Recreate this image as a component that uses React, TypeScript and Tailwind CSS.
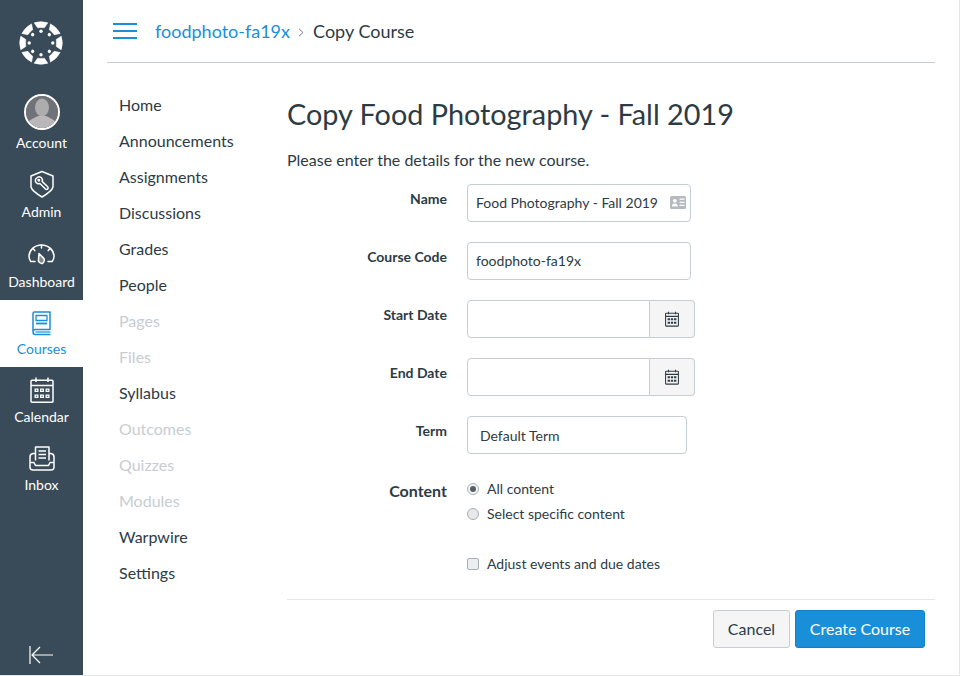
import React from 'react';

const courseLinks = [
  { name: 'Home' },
  { name: 'Announcements' },
  { name: 'Assignments' },
  { name: 'Discussions' },
  { name: 'Grades' },
  { name: 'People' },
  { name: 'Pages', off: true },
  { name: 'Files', off: true },
  { name: 'Syllabus' },
  { name: 'Outcomes', off: true },
  { name: 'Quizzes', off: true },
  { name: 'Modules', off: true },
  { name: 'Warpwire' },
  { name: 'Settings' },
];

function CanvasLogo() {
  const angles = [0, 45, 90, 135, 180, 225, 270, 315];
  return (
    <svg width="44" height="44" viewBox="-22 -22 44 44" fill="#fff">
      {angles.map((a) => (
        <g key={a} transform={`rotate(${a})`}>
          <path d="M-6.8 -20.2 Q0 -22.4 6.8 -20.2 L3.4 -15.2 Q0 -15.8 -3.4 -15.2 Z" stroke="#fff" strokeWidth="0.6" strokeLinejoin="round" />
          <circle cx="0" cy="-11.8" r="1.7" />
        </g>
      ))}
    </svg>
  );
}

function AccountIcon() {
  return (
    <div className="w-9 h-9 rounded-full border-2 border-white bg-[#8f8f8f] overflow-hidden">
      <svg width="32" height="32" viewBox="0 0 32 32">
        <rect width="32" height="32" fill="#6f7378" />
        <ellipse cx="16" cy="11.5" rx="7" ry="9" fill="#aeacac" />
        <path d="M0 32 V27 Q5 23 12 20 L20 20 Q27 23 32 27 V32 Z" fill="#b9b7b7" />
      </svg>
    </div>
  );
}

function AdminIcon() {
  return (
    <svg className="mb-px" width="26" height="28" viewBox="0 0 26 28" fill="none" stroke="#fff" strokeWidth="1.5" strokeLinejoin="round" strokeLinecap="round">
      <path d="M13 1.5 L24 6 V17 Q23 21 13 27 Q3 21 2 17 V6 Z" />
      <path d="M8.2 7.6 a3.2 3.2 0 0 1 4.4 .4 a3.2 3.2 0 0 1 .5 3.4 l5.6 5.4 a1.5 1.5 0 0 1 -2.2 2.2 l-5.6 -5.5 a3.3 3.3 0 0 1 -3.6 -.7 a3.2 3.2 0 0 1 .9 -5.2 Z" />
      <circle cx="9.8" cy="10.2" r="0.7" />
    </svg>
  );
}

function DashboardIcon() {
  return (
    <svg className="mb-1" width="27" height="21" viewBox="0 0 27 21" fill="none" stroke="#fff" strokeWidth="1.5" strokeLinecap="round" strokeLinejoin="round">
      <path d="M7 17.5 H2.8 Q1 15 1 12.5 A12.5 11.5 0 0 1 26 12.5 Q26 15 24.2 17.5 H20" />
      <path d="M13.5 1 V4 M5 4.6 L6.8 6.6 M22 4.6 L20.2 6.6" />
      <path d="M11 9.5 L16 14.6 Q17 17.6 14.6 19.4 Q11.6 20 10.4 17 Z" fill="#fff" fillOpacity="0.35" />
    </svg>
  );
}

function CoursesIcon() {
  return (
    <svg width="21" height="25" viewBox="0 0 21 25" fill="none" stroke="#1a8fd9" strokeWidth="1.5" strokeLinejoin="round">
      <path d="M2 21 V2.5 Q2 1 3.5 1 H19 V18.5 H4 Q2 18.5 2 21 Q2 23.5 4 23.5 H19.5" />
      <path d="M4.5 21 H19.5" strokeWidth="1.2" />
      <rect x="5" y="4.5" width="11" height="5" strokeWidth="1.3" />
      <path d="M5 12.5 H16" strokeWidth="1.8" />
    </svg>
  );
}

function CalendarIcon({ size = 24, color = '#fff', sw = 1.5, className = '' }: { size?: number; color?: string; sw?: number; className?: string }) {
  return (
    <svg className={className} width={size} height={size + 2} viewBox="0 0 24 26" fill="none" stroke={color} strokeWidth={sw}>
      <rect x="1" y="3.2" width="22" height="22" rx="1" />
      <path d="M1 8.5 H23 M6 0.5 V5 M18 0.5 V5" />
      <g fill={color} stroke="none">
        <path d="M4.5 11.5h4v3.6h-4z M10 11.5h4v3.6h-4z M15.5 11.5h4v3.6h-4z M4.5 17.5h4v3.6h-4z M10 17.5h4v3.6h-4z M15.5 17.5h4v3.6h-4z" />
      </g>
      <g fill="#394b58" stroke="none" opacity={color === '#fff' ? 1 : 0}>
        <path d="M5.8 12.8h1.4v1H5.8z M11.3 12.8h1.4v1h-1.4z M16.8 12.8h1.4v1h-1.4z M5.8 18.8h1.4v1H5.8z M11.3 18.8h1.4v1h-1.4z M16.8 18.8h1.4v1h-1.4z" />
      </g>
    </svg>
  );
}

function InboxIcon() {
  return (
    <svg className="mb-px" width="26" height="25" viewBox="0 0 26 25" fill="none" stroke="#fff" strokeWidth="1.5" strokeLinejoin="round">
      <path d="M6.5 14.5 V1 H20 V14.5" />
      <path d="M9.5 5 H17 M9.5 8.5 H17 M9.5 12 H17" />
      <path d="M6.5 7.5 H4 Q1 8 1 11 V21 Q1 24 4 24 H22 Q25 24 25 21 V11 Q25 8 22 7.5 H20" />
      <path d="M1 16.5 H5 L6.5 19.5 H19.5 L21 16.5 H25" />
    </svg>
  );
}

function SideItem({ icon, label, active, h }: { icon: React.ReactNode; label: string; active?: boolean; h: string }) {
  return (
    <div className={`${h} flex flex-col items-center justify-end pb-[10px] ${active ? 'bg-white text-[#1a8fd9]' : 'text-white'}`}>
      {icon}
      <span className="text-[14px] leading-[17px] mt-[4px]">{label}</span>
    </div>
  );
}

function FormRow({ label, children }: { label: string; children: React.ReactNode }) {
  return (
    <div className="flex h-[38px] mb-5">
      <label className="w-[160px] text-right text-[14px] font-bold text-[#2d3b45] leading-[30px]">{label}</label>
      <div className="ml-5">{children}</div>
    </div>
  );
}

function DateField() {
  return (
    <div className="flex h-[38px] w-[228px]">
      <div className="w-[183px] bg-white border border-[#c7cdd1] rounded-l-[4px]" />
      <div className="flex-1 bg-[#f5f5f5] border border-l-0 border-[#c7cdd1] rounded-r-[4px] flex items-center justify-center">
        <CalendarIcon size={14} color="#2d3b45" sw={1.8} />
      </div>
    </div>
  );
}

export default function App() {
  return (
    <div className="w-[960px] h-[676px] flex bg-white overflow-hidden text-[#2d3b45] font-['Lato','Open_Sans',sans-serif] border-r border-b border-[#e4e6e8]">
      {/* global nav */}
      <aside className="w-[83px] shrink-0 bg-[#394b58] flex flex-col">
        <div className="h-[92px] flex items-center justify-center pb-[6px] pr-[1px]">
          <CanvasLogo />
        </div>
        <SideItem h="h-[69px]" label="Account" icon={<AccountIcon />} />
        <SideItem h="h-[69px]" label="Admin" icon={<AdminIcon />} />
        <SideItem h="h-[70px]" label="Dashboard" icon={<DashboardIcon />} />
        <SideItem h="h-[67px]" label="Courses" active icon={<CoursesIcon />} />
        <SideItem h="h-[68px]" label="Calendar" icon={<CalendarIcon className="mb-px" />} />
        <SideItem h="h-[68px]" label="Inbox" icon={<InboxIcon />} />
        <div className="mt-auto h-[30px] flex justify-center pr-[2px]">
          <svg width="26" height="20" viewBox="0 0 26 20" fill="none" stroke="#fff" strokeWidth="1.2">
            <path d="M2 1 V19 M25 10 H4 M12 2 L4 10 L12 18" />
          </svg>
        </div>
      </aside>

      <div className="flex-1 pl-6 pr-6 flex flex-col">
        <header className="h-[63px] shrink-0 border-b border-[#c7cdd1] flex items-center pl-[6px]">
          <div className="w-[24px] flex flex-col gap-[5px]">
            <span className="h-[2px] bg-[#1a8fd9]" />
            <span className="h-[2px] bg-[#1a8fd9]" />
            <span className="h-[2px] bg-[#1a8fd9]" />
          </div>
          <span className="ml-[18px] text-[18px] text-[#1a8fd9]">foodphoto-fa19x</span>
          <svg className="ml-[8px] mr-[9px] mt-[2px]" width="6" height="9" viewBox="0 0 6 9" fill="none" stroke="#73818c" strokeWidth="1">
            <path d="M1 .8 L5 4.5 L1 8.2" />
          </svg>
          <span className="text-[18px]">Copy Course</span>
        </header>

        <div className="flex flex-1">
          <nav className="w-[180px] shrink-0 pl-3 pt-6">
            {courseLinks.map((l) => (
              <div key={l.name} className={`h-9 text-[16px] leading-[36px] ${l.off ? 'text-[#c7cdd1]' : 'text-[#2d3b45]'}`}>
                {l.name}
              </div>
            ))}
          </nav>

          <main className="flex-1 pt-[32px]">
            <h1 className="text-[28.8px] leading-[38px] font-normal">Copy Food Photography - Fall 2019</h1>
            <p className="mt-[17px] text-[16px] leading-[20px]">Please enter the details for the new course.</p>

            <div className="mt-[14px]">
              <FormRow label="Name">
                <div className="w-[224px] h-[38px] border border-[#c7cdd1] rounded-[4px] flex items-center pl-2 pr-[4px] pb-[2px] justify-between text-[14px]">
                  <span>Food Photography - Fall 2019</span>
                  <svg width="16" height="13" viewBox="0 0 16 13">
                    <rect width="16" height="13" rx="1.5" fill="#b4babd" />
                    <circle cx="4.8" cy="4.8" r="1.9" fill="#fff" />
                    <path d="M1.8 10.5 Q2 7.5 4.8 7.5 Q7.6 7.5 7.8 10.5 Z" fill="#fff" />
                    <path d="M9.5 3.2 H14.5 M9.5 6.3 H14.5 M9.5 9.4 H14.5" stroke="#fff" strokeWidth="1.3" />
                  </svg>
                </div>
              </FormRow>
              <FormRow label="Course Code">
                <div className="w-[224px] h-[38px] border border-[#c7cdd1] rounded-[4px] flex items-center pl-2 pb-[2px] text-[14px]">foodphoto-fa19x</div>
              </FormRow>
              <FormRow label="Start Date">
                <DateField />
              </FormRow>
              <FormRow label="End Date">
                <DateField />
              </FormRow>
              <FormRow label="Term">
                <div className="w-[220px] h-[38px] border border-[#c7cdd1] rounded-[4px] flex items-center pl-3 text-[14px]">Default Term</div>
              </FormRow>
            </div>

            <div className="flex mt-[22px]">
              <div className="w-[160px] text-right text-[16px] font-bold leading-[24px] pt-[3px]">Content</div>
              <div className="ml-5 text-[14px] text-[#2d3b45]">
                <div className="h-[25px] flex items-center">
                  <span className="w-3 h-3 rounded-full border border-[#a5afb5] bg-[#f5f5f5] flex items-center justify-center mr-2">
                    <span className="w-[6px] h-[6px] rounded-full bg-[#555f66]" />
                  </span>
                  All content
                </div>
                <div className="h-[25px] flex items-center">
                  <span className="w-3 h-3 rounded-full border border-[#a5afb5] bg-[#e6e8ea] mr-2" />
                  Select specific content
                </div>
                <div className="h-[25px] flex items-center mt-[25px]">
                  <span className="w-3 h-3 rounded-[2px] border border-[#a5afb5] bg-[#eceeef] mr-2" />
                  Adjust events and due dates
                </div>
              </div>
            </div>

            <div className="mt-[23px] border-t border-[#e4e6e8] pt-[10px] flex justify-end pr-[10px] gap-[5px]">
              <button className="w-[77px] h-[38px] bg-[#f5f5f5] border border-[#c7cdd1] rounded-[3px] text-[16px] text-[#2d3b45]">Cancel</button>
              <button className="w-[130px] h-[38px] bg-[#1a8fd9] rounded-[3px] text-[16px] text-white border border-[#1580c4]">Create Course</button>
            </div>
          </main>
        </div>
      </div>
    </div>
  );
}
